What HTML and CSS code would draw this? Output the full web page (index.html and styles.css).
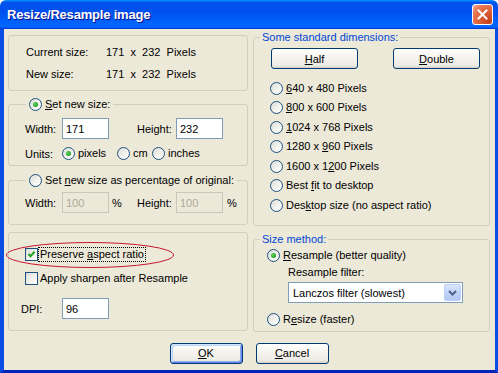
FILE: index.html
```html
<!DOCTYPE html>
<html lang="en">
<head>
    <meta charset="UTF-8">
    <meta name="viewport" content="width=device-width, initial-scale=1.0">
    <title>Resize/Resample image</title>
    <link rel="stylesheet" href="styles.css">
</head>
<body>
    <div class="window">
        <div class="titlebar">
            <span class="title">Resize/Resample image</span>
            <div class="close-btn">
                <svg width="13" height="13" viewBox="0 0 13 13"><path d="M2.5 2.5 L10.5 10.5 M10.5 2.5 L2.5 10.5" stroke="#fff" stroke-width="2" stroke-linecap="square"/></svg>
            </div>
        </div>

        <div class="client">
            <div class="columns">
                <div class="col col-left">
                    <fieldset class="group sizes">
                        <div class="size-row"><span class="size-label">Current size:</span><span class="size-val">171  x  232  Pixels</span></div>
                        <div class="size-row"><span class="size-label">New size:</span><span class="size-val">171  x  232  Pixels</span></div>
                    </fieldset>

                    <fieldset class="group new-size">
                        <legend><span class="radio on"></span><span><u>S</u>et new size:</span></legend>
                        <div class="field-row">
                            <span class="lbl">Width:</span><input class="text-in" value="171">
                            <span class="lbl lbl-h">Height:</span><input class="text-in" value="232">
                        </div>
                        <div class="units-row">
                            <span class="lbl">Units:</span>
                            <label class="opt w-pixels"><span class="radio on"></span>pixels</label>
                            <label class="opt w-cm"><span class="radio"></span>cm</label>
                            <label class="opt"><span class="radio"></span>inches</label>
                        </div>
                    </fieldset>

                    <fieldset class="group percent">
                        <legend><span class="radio"></span><span>Set <u>n</u>ew size as percentage of original:</span></legend>
                        <div class="field-row">
                            <span class="lbl">Width:</span><input class="text-in" value="100" disabled><span class="pct">%</span>
                            <span class="lbl">Height:</span><input class="text-in" value="100" disabled><span class="pct">%</span>
                        </div>
                    </fieldset>

                    <fieldset class="group options">
                        <div class="check-row preserve">
                            <span class="check on">
                                <svg width="11" height="11" viewBox="0 0 11 11"><path d="M2.5 5 L4.5 7.2 L8.6 2.8" fill="none" stroke="#21a121" stroke-width="2"/></svg>
                            </span>
                            <span class="focus">Preserve <u>a</u>spect ratio</span>
                            <svg class="circle-mark" width="170" height="28" viewBox="0 0 170 28"><ellipse cx="85" cy="14" rx="83.5" ry="12.5" fill="none" stroke="#c8172e" stroke-width="1"/></svg>
                        </div>
                        <div class="check-row">
                            <span class="check"></span>
                            <span>Apply sharpen after Resample</span>
                        </div>
                        <div class="dpi-row">
                            <span class="lbl-dpi">DPI:</span><input class="text-in" value="96">
                        </div>
                    </fieldset>
                </div>

                <div class="col col-right">
                    <fieldset class="group std">
                        <legend class="blue">Some standard dimensions:</legend>
                        <div class="btn-row">
                            <button class="btn btn-wide"><u>H</u>alf</button>
                            <button class="btn btn-wide"><u>D</u>ouble</button>
                        </div>
                        <div class="radio-list">
                            <label class="opt"><span class="radio"></span><span><u>6</u>40 x 480 Pixels</span></label>
                            <label class="opt"><span class="radio"></span><span><u>8</u>00 x 600 Pixels</span></label>
                            <label class="opt"><span class="radio"></span><span><u>1</u>024 x 768 Pixels</span></label>
                            <label class="opt"><span class="radio"></span><span>1280 x <u>9</u>60 Pixels</span></label>
                            <label class="opt"><span class="radio"></span><span>1600 x 1<u>2</u>00 Pixels</span></label>
                            <label class="opt"><span class="radio"></span><span>Best <u>f</u>it to desktop</span></label>
                            <label class="opt"><span class="radio"></span><span>Des<u>k</u>top size (no aspect ratio)</span></label>
                        </div>
                    </fieldset>

                    <fieldset class="group method">
                        <legend class="blue">Size method:</legend>
                        <label class="opt ind"><span class="radio on"></span><span><u>R</u>esample (better quality)</span></label>
                        <div class="filter-label">Resample filter:</div>
                        <div class="combo">
                            <span>Lanczos filter (slowest)</span>
                            <span class="combo-btn">
                                <svg width="9" height="6" viewBox="0 0 9 6"><path d="M1 1 L4.5 4.5 L8 1" fill="none" stroke="#4d6185" stroke-width="2"/></svg>
                            </span>
                        </div>
                        <label class="opt ind resize"><span class="radio"></span><span>R<u>e</u>size (faster)</span></label>
                    </fieldset>
                </div>
            </div>

            <div class="actions">
                <button class="btn btn-default"><u>O</u>K</button>
                <button class="btn"><u>C</u>ancel</button>
            </div>
        </div>
    </div>
</body>
</html>
```

FILE: styles.css
```css
* {
    margin: 0;
    padding: 0;
    box-sizing: border-box;
}

body {
    width: 498px;
    height: 373px;
    overflow: hidden;
    background: #ffffff;
    font-family: "Liberation Sans", Arial, sans-serif;
    font-size: 11px;
    color: #000;
}

.window {
    display: flex;
    flex-direction: column;
    height: 373px;
}

/* title bar */
.titlebar {
    height: 29px;
    flex: none;
    display: flex;
    align-items: center;
    justify-content: space-between;
    padding: 0 5px 0 7px;
    border-radius: 6px 6px 0 0;
    background: linear-gradient(180deg, #0997ff, #0053ee 8%, #0050ee 40%, #0066ff 88%, #0066ff 93%, #005bff 95%, #003dd7 96%, #003dd7);
}

.title {
    color: #fff;
    font-weight: bold;
    font-size: 13px;
    letter-spacing: -0.2px;
    text-shadow: 1px 1px #0f1089;
}

.close-btn {
    width: 21px;
    height: 21px;
    border: 1px solid #fff;
    border-radius: 3px;
    display: flex;
    align-items: center;
    justify-content: center;
    background: radial-gradient(circle at 85% 85%, #c4401c 0, #dc6036 45%, #e77a58 75%, #f5b49c 100%);
}

/* client area */
.client {
    flex: 1;
    background: #ece9d8;
    border-style: solid;
    border-color: #0a4de2;
    border-bottom-color: #0024b8;
    border-width: 0 3px 3px 4px;
    padding: 2px 5px 0 4px;
}

.columns {
    display: grid;
    grid-template-columns: 240px 237px;
    column-gap: 5px;
    align-items: start;
}

.col {
    display: flex;
    flex-direction: column;
}

.group {
    border: 1px solid #d0d0bf;
    border-radius: 3px;
    min-width: 0;
}

legend {
    display: flex;
    align-items: center;
    gap: 3px;
    height: 13px;
    line-height: 13px;
    padding: 0 2px;
}

legend.blue {
    color: #0046d5;
}

.col-left legend {
    margin-left: 1px;
    padding: 0 3px;
}

/* left column groups */
.sizes {
    margin-top: 4px;
    padding: 10px 0 9px 17px;
    display: flex;
    flex-direction: column;
    gap: 9px;
}

.size-row {
    height: 13px;
    line-height: 13px;
}

.size-label {
    display: inline-block;
    width: 80px;
}

.size-val {
    white-space: pre;
}

.new-size {
    margin-top: 7px;
    padding: 7px 0 5px 16px;
}

.percent {
    margin-top: 8px;
    padding: 5px 0 11px 16px;
}

.field-row {
    display: flex;
    align-items: center;
    height: 21px;
}

.lbl {
    width: 37px;
    flex: none;
}

.lbl-h {
    margin-left: 28px;
    width: 39px;
}

.percent .pct + .lbl {
    width: 39px;
}

.pct {
    width: 28px;
    flex: none;
    padding-left: 3px;
}

.percent .pct:last-child {
    padding-left: 4px;
}

.text-in {
    width: 47px;
    height: 21px;
    flex: none;
    border: 1px solid #7f9db9;
    background: #fff;
    font: inherit;
    padding: 0 3px;
    color: #000;
}

.text-in:disabled {
    background: #ece9d8;
    border-color: #c9c7ba;
    color: #aca899;
}

.units-row {
    display: flex;
    align-items: center;
    height: 13px;
    margin-top: 8px;
}

.opt {
    display: flex;
    align-items: center;
    gap: 3px;
    height: 13px;
    line-height: 13px;
}

.w-pixels {
    width: 55px;
}

.w-cm {
    width: 35px;
}

.radio {
    position: relative;
    flex: none;
    width: 13px;
    height: 13px;
    border-radius: 50%;
    border: 1px solid #1c5180;
    background: linear-gradient(135deg, #dcdcd7 0%, #f4f4f0 60%, #ffffff 100%);
}

.radio.on::after {
    content: "";
    position: absolute;
    left: 3px;
    top: 3px;
    width: 5px;
    height: 5px;
    border-radius: 50%;
    background: radial-gradient(circle at 40% 40%, #64d864 0, #21a121 65%, #188a18 100%);
}

.options {
    margin-top: 7px;
    padding: 15px 0 11px 16px;
}

.check-row {
    display: flex;
    align-items: center;
    gap: 1px;
    height: 13px;
    line-height: 13px;
}

.check-row + .check-row {
    margin-top: 11px;
}

.check-row .check + span:not(.focus) {
    margin-left: 1px;
}

.check {
    flex: none;
    width: 13px;
    height: 13px;
    border: 1px solid #1c5180;
    background: linear-gradient(135deg, #dcdcd7 0%, #f4f4f0 60%, #ffffff 100%);
    display: flex;
    align-items: center;
    justify-content: center;
}

.focus {
    padding: 0 1px;
    outline: 1px dotted #000;
}

.preserve {
    position: relative;
}

.circle-mark {
    position: absolute;
    left: -20px;
    top: -7px;
    pointer-events: none;
}

.dpi-row {
    display: flex;
    align-items: center;
    margin-top: 13px;
    margin-left: -4px;
}

.lbl-dpi {
    width: 41px;
}

/* right column groups */
.std {
    padding: 4px 0 13.5px 6px;
}

.btn-row {
    display: flex;
    gap: 35px;
    margin-left: 11px;
}

.btn {
    height: 21px;
    width: 73px;
    border: 1px solid #003c74;
    border-radius: 3px;
    background: linear-gradient(180deg, #ffffff 0%, #f5f4ef 40%, #ecebe6 86%, #d6d0c5 100%);
    font: inherit;
    color: #000;
}

.btn-wide {
    width: 87px;
}

.btn-default {
    box-shadow: inset 1px 1px #cee7ff, inset -1px -1px #6982ee, inset 2px 2px #bcd4f6, inset -2px -2px #89ade4;
}

.radio-list {
    display: flex;
    flex-direction: column;
    gap: 6.5px;
    margin-top: 12.5px;
    margin-left: 10px;
}

.method {
    margin-top: 7px;
    padding: 3px 0 5px 6px;
}

.ind {
    margin-left: 7px;
}

.filter-label {
    margin: 4px 0 0 28px;
    height: 13px;
    line-height: 13px;
}

.combo {
    display: flex;
    align-items: center;
    justify-content: space-between;
    width: 175px;
    height: 21px;
    margin: 3px 0 0 28px;
    border: 1px solid #7f9db9;
    background: #fff;
    padding: 0 1px 0 4px;
}

.combo-btn {
    width: 17px;
    height: 17px;
    display: flex;
    align-items: center;
    justify-content: center;
    border: 1px solid #bcd1f7;
    border-radius: 2px;
    background: linear-gradient(180deg, #dbe6fd 0%, #c1d3fb 50%, #b3c8f5 100%);
}

.resize {
    margin-top: 9.5px;
}

/* dialog buttons */
.actions {
    display: flex;
    justify-content: center;
    gap: 13px;
    margin-top: 11px;
}
```
